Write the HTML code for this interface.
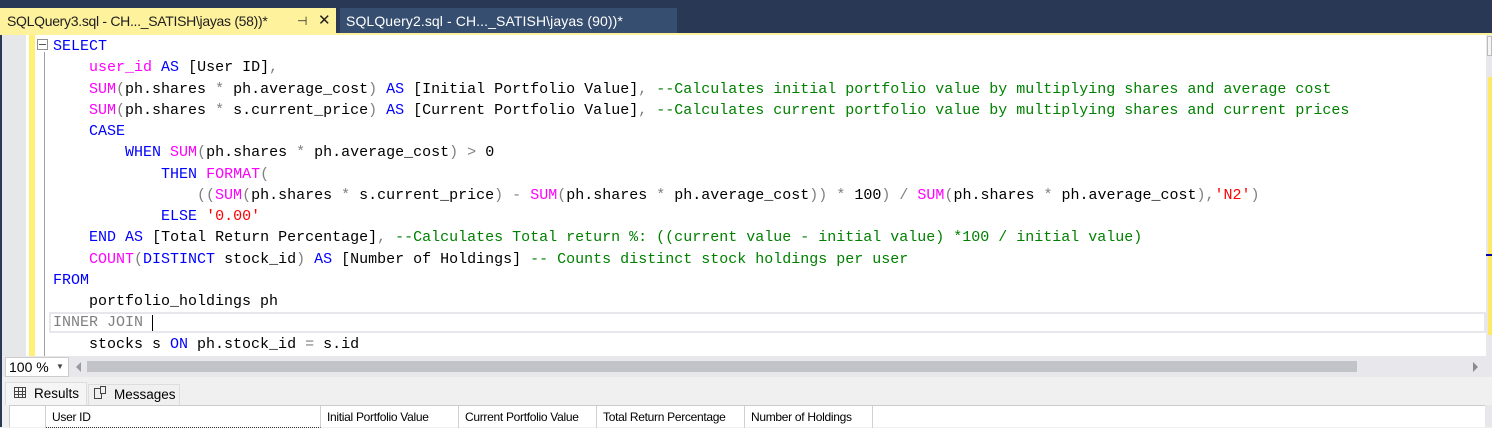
<!DOCTYPE html>
<html><head><style>
*{margin:0;padding:0;box-sizing:border-box}
body{width:1492px;height:427px;overflow:hidden;background:#f0f0f0;position:relative;font-family:"Liberation Sans",sans-serif}
.abs{position:absolute}
.code{font-family:"Liberation Mono",monospace;font-size:15px;white-space:pre;line-height:21.25px;color:#000}
.k{color:#0000ff}.f{color:#ff00ff}.c{color:#008000}.g{color:#808080}.s{color:#ff0000}
.hd{position:absolute;top:0;height:22px;border-right:1px solid #d0d0d0;font-size:12px;line-height:22px;padding-left:6px;letter-spacing:-0.3px}
</style></head><body>
<div class="abs" style="left:0;top:0;width:1492px;height:35px;background:#293955"></div>
<div class="abs" style="left:0;top:8px;width:336px;height:26px;background:#fff29d;font-size:14px;line-height:26px;padding-left:7px;color:#1e1e1e;letter-spacing:-0.3px">SQLQuery3.sql - CH..._SATISH\jayas (58))*<span style="position:absolute;left:297px;font-size:12px">⊣</span><span style="position:absolute;left:318px;font-size:15px">✕</span></div>
<div class="abs" style="left:340px;top:8px;width:337px;height:26px;background:#364e6f;font-size:14px;line-height:26px;padding-left:6px;color:#fff;letter-spacing:0.1px">SQLQuery2.sql - CH..._SATISH\jayas (90))*</div>
<div class="abs" style="left:0;top:33px;width:1492px;height:2px;background:#fff29d"></div>
<div class="abs" style="left:0;top:35px;width:1492px;height:321px;background:#fff"></div>
<div class="abs" style="left:0;top:35px;width:2px;height:392px;background:#293955"></div>
<div class="abs" style="left:2px;top:35px;width:24px;height:321px;background:#e6e7e8"></div>
<div class="abs" style="left:29px;top:35px;width:6px;height:321px;background:#fff176"></div>
<div class="abs" style="left:44px;top:52px;width:1px;height:304px;background:#a0a0a0"></div>
<div class="abs" style="left:37px;top:39px;width:11px;height:11px;border:1px solid #909090;background:#fff"></div>
<div class="abs" style="left:39px;top:44px;width:7px;height:1px;background:#555"></div>
<div class="abs" style="left:1486px;top:35px;width:6px;height:321px;background:#e8e8ec"></div>
<div class="abs" style="left:1487px;top:36px;width:5px;height:20px;background:#f4f4f6;border:1px solid #bbb"></div>
<div class="abs" style="left:1488px;top:77px;width:4px;height:258px;background:#ffe866"></div>
<div class="abs" style="left:1486px;top:254px;width:6px;height:2px;background:#0000aa"></div>
<div class="abs" style="left:49px;top:312px;width:1437px;height:21px;border:2px solid #e8e8ec"></div>
<div class="abs" style="left:152px;top:315px;width:1px;height:16px;background:#000"></div>
<div class="abs code" style="left:53px;top:36px"><span class="k">SELECT</span>
    <span class="f">user_id</span> <span class="k">AS</span> [User ID]<span class="g">,</span>
    <span class="f">SUM</span><span class="g">(</span>ph.shares <span class="g">*</span> ph.average_cost<span class="g">)</span> <span class="k">AS</span> [Initial Portfolio Value]<span class="g">,</span> <span class="c">--Calculates initial portfolio value by multiplying shares and average cost</span>
    <span class="f">SUM</span><span class="g">(</span>ph.shares <span class="g">*</span> s.current_price<span class="g">)</span> <span class="k">AS</span> [Current Portfolio Value]<span class="g">,</span> <span class="c">--Calculates current portfolio value by multiplying shares and current prices</span>
    <span class="k">CASE</span>
        <span class="k">WHEN</span> <span class="f">SUM</span><span class="g">(</span>ph.shares <span class="g">*</span> ph.average_cost<span class="g">)</span> <span class="g">&gt;</span> 0
            <span class="k">THEN</span> <span class="f">FORMAT</span><span class="g">(</span>
                <span class="g">((</span><span class="f">SUM</span><span class="g">(</span>ph.shares <span class="g">*</span> s.current_price<span class="g">)</span> <span class="g">-</span> <span class="f">SUM</span><span class="g">(</span>ph.shares <span class="g">*</span> ph.average_cost<span class="g">))</span> <span class="g">*</span> 100<span class="g">)</span> <span class="g">/</span> <span class="f">SUM</span><span class="g">(</span>ph.shares <span class="g">*</span> ph.average_cost<span class="g">),</span><span class="s">'N2'</span><span class="g">)</span>
            <span class="k">ELSE</span> <span class="s">'0.00'</span>
    <span class="k">END</span> <span class="k">AS</span> [Total Return Percentage]<span class="g">,</span> <span class="c">--Calculates Total return %: ((current value - initial value) *100 / initial value)</span>
    <span class="f">COUNT</span><span class="g">(</span><span class="k">DISTINCT</span> stock_id<span class="g">)</span> <span class="k">AS</span> [Number of Holdings] <span class="c">-- Counts distinct stock holdings per user</span>
<span class="k">FROM</span>
    portfolio_holdings ph
<span class="g">INNER JOIN</span>
    stocks s <span class="k">ON</span> ph.stock_id <span class="g">=</span> s.id</div>
<div class="abs" style="left:2px;top:356px;width:1490px;height:21px;background:#e8e8ec"></div>
<div class="abs" style="left:5px;top:357px;width:64px;height:20px;background:#fff;border:1px solid #ccc;font-size:14px;line-height:18px;padding-left:3px">100 %<span style="position:absolute;left:50px;font-size:8px;color:#444">▼</span></div>
<div class="abs" style="left:76px;top:362px;width:0;height:0;border-top:5px solid transparent;border-bottom:5px solid transparent;border-right:5px solid #9a9aa2"></div>
<div class="abs" style="left:87px;top:361px;width:1270px;height:11px;background:#c2c3c9"></div>
<div class="abs" style="left:1473px;top:362px;width:0;height:0;border-top:5px solid transparent;border-bottom:5px solid transparent;border-left:5px solid #8a8a92"></div>
<div class="abs" style="left:5px;top:382px;width:82px;height:23px;background:#f5f5f5;border:1px solid #ddd;border-bottom:none;font-size:13.5px;line-height:22px;padding-left:28px">Results</div>
<div class="abs" style="left:14px;top:387px;width:12px;height:11px;border:1px solid #444;background:linear-gradient(#444,#444) 0 3px/100% 1px no-repeat,linear-gradient(#444,#444) 0 6px/100% 1px no-repeat,linear-gradient(90deg,#444,#444) 3px 0/1px 100% no-repeat,linear-gradient(90deg,#444,#444) 7px 0/1px 100% no-repeat"></div>
<div class="abs" style="left:88px;top:384px;width:92px;height:21px;border:1px solid #ddd;border-bottom:none;font-size:13.5px;line-height:20px;padding-left:25px">Messages</div>
<div class="abs" style="left:94px;top:388px;width:8px;height:11px;border:1px solid #444"></div>
<div class="abs" style="left:100px;top:386px;width:6px;height:8px;border:1px solid #444;background:#f0f0f0"></div>
<div class="abs" style="left:9px;top:405px;width:1483px;height:22px;background:#fff;border-top:1px solid #ccc;border-left:1px solid #ccc">
<div class="hd" style="left:0;width:36px"></div>
<div class="hd" style="left:36px;width:275px;border-bottom:1px dotted #333">User ID</div>
<div class="hd" style="left:311px;width:138px">Initial Portfolio Value</div>
<div class="hd" style="left:449px;width:138px">Current Portfolio Value</div>
<div class="hd" style="left:587px;width:148px">Total Return Percentage</div>
<div class="hd" style="left:735px;width:128px">Number of Holdings</div>
</div>
<div class="abs" style="left:1485px;top:405px;width:7px;height:22px;background:#e8e8ec"></div>
</body></html>
